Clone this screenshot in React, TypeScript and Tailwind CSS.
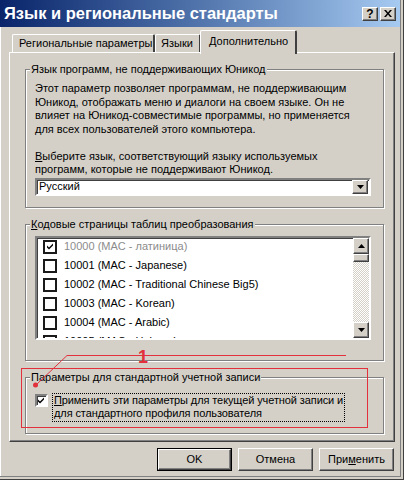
import type { ReactNode } from 'react'

const font = { fontFamily: '"Liberation Sans", Arial, sans-serif' }

const raised = 'border border-t-white border-l-white border-r-[#404040] border-b-[#404040] shadow-[inset_-1px_-1px_0_#808080] bg-[#d4d0c8]'
const sunken = 'border-2 border-t-[#808080] border-l-[#808080] border-r-white border-b-white shadow-[inset_1px_1px_0_#404040]'

const codePages = [
  { text: '10000 (MAC - латиница)', checked: true, disabled: true },
  { text: '10001 (MAC - Japanese)' },
  { text: '10002 (MAC - Traditional Chinese Big5)' },
  { text: '10003 (MAC - Korean)' },
  { text: '10004 (MAC - Arabic)' },
  { text: '10005 (MAC - Hebrew)' },
]

function GroupBox({ label, className, children }: { label: ReactNode; className: string; children: ReactNode }) {
  return (
    <div className={'ml-[15px] w-[359px] border border-[#808080] shadow-[inset_1px_1px_0_#fff,1px_1px_0_#fff] ' + className}>
      <div className="-mt-[8px] ml-[4px] px-[1px] w-fit bg-[#d4d0c8] leading-[14px]">{label}</div>
      {children}
    </div>
  )
}

function Arrow({ up }: { up?: boolean }) {
  return (
    <svg width="7" height="4" viewBox="0 0 7 4">
      <path d={up ? 'M3.5 0L7 4H0z' : 'M0 0h7L3.5 4z'} fill="#000" />
    </svg>
  )
}

function Check({ color = '#000' }: { color?: string }) {
  return (
    <svg width="9" height="9" viewBox="0 0 9 9">
      <path d="M1 3.5l2 2 4-4v2l-4 4-2-2z" fill={color} />
    </svg>
  )
}

function Btn({ children, main }: { children: ReactNode; main?: boolean }) {
  return (
    <div className={'w-[75px] h-[23px] ' + (main ? 'border border-black' : '')}>
      <div className={'w-full h-full flex items-center justify-center text-[11px] ' + raised}>{children}</div>
    </div>
  )
}

export default function App() {
  return (
    <div
      className="w-[404px] h-[480px] bg-[#d4d0c8] relative overflow-hidden text-[11px] text-black shadow-[inset_-1px_0_0_#404040,inset_0_-1px_0_#404040,inset_-3px_-3px_0_#d4d0c8,inset_-4px_-4px_0_#808080,inset_1px_0_0_#fff]"
      style={font}
    >
      {/* title bar */}
      <div className="h-[27px] mr-[4px] flex items-center bg-gradient-to-r from-[#0a246a] to-[#a6caf0] pl-[4px] pr-[4px]">
        <span className="text-white font-bold text-[16.5px] leading-none">Язык и региональные стандарты</span>
        <div className="ml-auto flex gap-[2px]">
          <div className={'w-[16px] h-[14px] flex items-center justify-center font-bold text-[12px] leading-none ' + raised}>?</div>
          <div className={'w-[16px] h-[14px] flex items-center justify-center ' + raised}>
            <svg width="8" height="7" viewBox="0 0 8 7">
              <path d="M0 0h2l2 2.5L6 0h2L5 3.5 8 7H6L4 4.5 2 7H0l3-3.5z" fill="#000" />
            </svg>
          </div>
        </div>
      </div>

      {/* tabs */}
      <div className="h-[25px] flex items-end pl-[12px] relative z-10">
        <div className="w-[143px] h-[18px] pl-[6px] flex items-center border-t border-l border-t-white border-l-white border-r-2 border-r-[#404040] rounded-tl-[2px] rounded-tr-[2px]">
          Региональные параметры
        </div>
        <div className="w-[46px] h-[18px] pl-[5px] flex items-center border-t border-l border-t-white border-l-white border-r-2 border-r-[#404040] rounded-tl-[2px] rounded-tr-[2px]">
          Языки
        </div>
        <div className="w-[97px] h-[24px] -ml-[1px] -mb-[2px] pl-[8px] pb-[2px] flex items-center bg-[#d4d0c8] border-t border-l border-t-white border-l-white border-r-2 border-r-[#404040] rounded-tl-[2px] rounded-tr-[2px]">
          Дополнительно
        </div>
      </div>

      {/* panel */}
      <div className="ml-[9px] w-[386px] h-[390px] border-t border-l border-t-white border-l-white border-r border-b border-r-[#404040] border-b-[#404040] shadow-[inset_-1px_-1px_0_#808080]">
        <GroupBox label="Язык программ, не поддерживающих Юникод" className="mt-[16px] h-[139px]">
          <div className="pl-[9px] pt-[6px] leading-[13.5px]">
            <p>
              Этот параметр позволяет программам, не поддерживающим
              <br />
              Юникод, отображать меню и диалоги на своем языке. Он не
              <br />
              влияет на Юникод-совместимые программы, но применяется
              <br />
              для всех пользователей этого компьютера.
            </p>
            <p className="mt-[13.5px]">
              <span className="underline">В</span>ыберите язык, соответствующий языку используемых
              <br />
              программ, которые не поддерживают Юникод.
            </p>
            <div className={'mt-[1px] w-[336px] h-[18px] bg-white flex items-center ' + sunken}>
              <span className="pl-[2px] flex-1">Русский</span>
              <div className={'w-[16px] h-[14px] mr-[1px] flex items-center justify-center ' + raised}>
                <Arrow />
              </div>
            </div>
          </div>
        </GroupBox>

        <GroupBox
          label={<><span className="underline">К</span>одовые страницы таблиц преобразования</>}
          className="mt-[16px] h-[137px]"
        >
          <div className={'ml-[9px] mt-[5px] w-[336px] h-[104px] bg-white flex overflow-hidden ' + sunken}>
            <div className="flex-1 -mt-[1px]">
              {codePages.map((row, i) => (
                <div key={i} className="h-[19px] flex items-center pl-[6px] gap-[7px] whitespace-nowrap">
                  <div className="w-[14px] h-[14px] border-2 border-[#1a1a1a] bg-white flex items-center justify-center shrink-0">
                    {row.checked && <Check />}
                  </div>
                  <span className={row.disabled ? 'text-[#8c8c8c]' : ''}>{row.text}</span>
                </div>
              ))}
            </div>
            <div className="w-[16px] h-full flex flex-col bg-[repeating-conic-gradient(#fff_0_25%,#d4d0c8_0_50%)] bg-[length:2px_2px]">
              <div className={'h-[16px] flex items-center justify-center ' + raised}>
                <Arrow up />
              </div>
              <div className={'h-[8px] ' + raised} />
              <div className="flex-1" />
              <div className={'h-[16px] flex items-center justify-center ' + raised}>
                <Arrow />
              </div>
            </div>
          </div>
        </GroupBox>

        <GroupBox label="Параметры для стандартной учетной записи" className="mt-[16px] h-[57px]">
          <div className="mt-[9px] pl-[9px] flex items-start gap-[4px]">
            <div className={'mt-[1px] w-[13px] h-[13px] bg-white flex items-center justify-center shrink-0 ' + sunken}>
              <Check />
            </div>
            <div className="border border-dotted border-black px-[1px] leading-[13px] pb-[1px] tracking-[-0.1px]">
              <span className="underline">П</span>рименить эти параметры для текущей учетной записи и
              <br />
              для стандартного профиля пользователя
            </div>
          </div>
        </GroupBox>
      </div>

      {/* buttons */}
      <div className="mt-[6px] pr-[10px] flex justify-end gap-[6px]">
        <Btn main>OK</Btn>
        <Btn>Отмена</Btn>
        <Btn>
          При<span className="underline">м</span>енить
        </Btn>
      </div>

      {/* red annotation */}
      <div className="absolute left-[21px] top-[368px] w-[347px] h-[60px] border border-[#e2303c]" />
      <svg className="absolute left-0 top-0 pointer-events-none" width="404" height="480">
        <line x1="67" y1="355.5" x2="346" y2="355.5" stroke="#e2303c" strokeWidth="1" />
        <line x1="67" y1="355.5" x2="36" y2="385" stroke="#e2303c" strokeWidth="1" />
        <circle cx="35.5" cy="385" r="2.5" fill="#e2303c" />
      </svg>
      <div className="absolute left-[138px] top-[348px] text-[18px] font-bold leading-none text-[#e2303c]">1</div>
    </div>
  )
}
